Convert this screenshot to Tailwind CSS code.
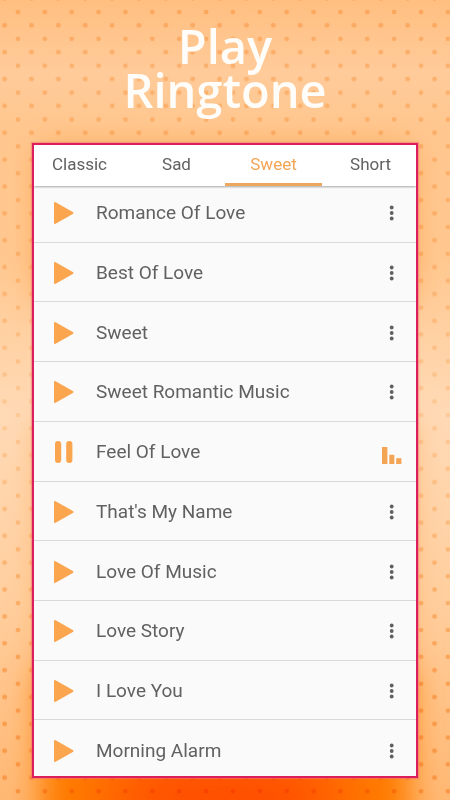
<!DOCTYPE html>
<html lang="en">
<head>
<meta charset="utf-8">
<meta name="viewport" content="width=device-width, initial-scale=1">
<title>Play Ringtone</title>
<script src="https://cdn.jsdelivr.net/npm/@tailwindcss/browser@4"></script>
</head>
<body class="font-[Roboto,sans-serif]">
<svg class="hidden" aria-hidden="true">
  <symbol id="play" viewBox="0 0 24 24"><path d="M3.6 1.2 20.8 10.9Q22.4 12 20.8 13.1L3.6 22.8Q2 23.6 2 21.8V2.2Q2 .4 3.6 1.2Z" fill="#fca54f"/></symbol>
  <symbol id="pause" viewBox="0 0 24 24"><rect x="3" y="1" width="6.2" height="22" rx="3" fill="#fca54f"/><rect x="14.2" y="1" width="6.2" height="22" rx="3" fill="#fca54f"/></symbol>
  <symbol id="more" viewBox="0 0 24 24"><g fill="#5f5f5f"><circle cx="11.7" cy="6.5" r="1.9"/><circle cx="11.7" cy="12" r="1.9"/><circle cx="11.7" cy="17.5" r="1.9"/></g></symbol>
  <symbol id="bars" viewBox="0 0 24 24"><g fill="#f4a455"><rect x="2" y="7" width="5.4" height="17"/><rect x="9.3" y="14.8" width="5" height="9.2"/><rect x="16.2" y="18.2" width="5.2" height="5.8"/></g></symbol>
</svg>
<div class="relative isolate flex min-h-screen flex-col overflow-hidden bg-linear-[180deg,#ffbf80_0%,#ffcb9a_9%,#ffc78f_16%,#ffc890_32%,#ffdab6_52%,#ffcf9f_75%,#ffb873_100%] px-8 pt-6 pb-[22px]">
  <div class="absolute inset-x-10 top-[150px] bottom-[500px] -z-20 bg-[#ffa24a] blur-lg"></div>
  <div class="absolute inset-x-10 top-[420px] bottom-[80px] -z-20 bg-[#ffb469] blur-lg"></div>
  <div class="absolute inset-x-10 top-[670px] -bottom-10 -z-20 bg-[#ff8000] blur-lg"></div>
  <div class="absolute inset-x-28 top-[760px] -bottom-10 -z-20 bg-[#ff3c00] blur-2xl"></div>
  <svg class="absolute inset-0 -z-10 size-full mix-blend-multiply" aria-hidden="true">
    <defs>
      <pattern id="dots" width="26.87" height="26.87" patternUnits="userSpaceOnUse">
        <circle cx="18" cy="12" r="2.4" fill="#f9d097"/><circle cx="4.6" cy="25.2" r="2.4" fill="#f9d097"/><circle cx="4.6" cy="-1.67" r="2.4" fill="#f9d097"/>
      </pattern>
      <linearGradient id="fade" x2="0" y2="1"><stop offset="0" stop-color="#bbb"/><stop offset=".35" stop-color="#999"/><stop offset=".52" stop-color="#666"/><stop offset=".85" stop-color="#fff"/></linearGradient>
      <mask id="fadeMask"><rect width="100%" height="100%" fill="url(#fade)"/></mask>
    </defs>
    <rect width="100%" height="100%" fill="url(#dots)" mask="url(#fadeMask)"/>
  </svg>

  <h1 class="text-center font-['Open_Sans',sans-serif] text-[47px] leading-[44px] font-semibold text-[#fffdf9]">Play<br>Ringtone</h1>

  <main class="mt-[31px] flex flex-1 flex-col overflow-hidden border-2 border-[#da1f5c] bg-[#fafafa] shadow-[0_0_1px_1px_#f4707088]">
    <nav class="relative z-10 bg-white shadow-[0_1px_2px_#00000055]" aria-label="Categories">
      <div class="-mx-[3px] grid grid-cols-4 text-center text-[17px] leading-6 text-[#616161]">
        <a href="#classic" class="border-b-3 border-transparent py-[7px]">Classic</a>
        <a href="#sad" class="border-b-3 border-transparent py-[7px]">Sad</a>
        <a href="#sweet" aria-current="page" class="border-b-3 border-[#eda860] py-[7px] text-[#f4a455]">Sweet</a>
        <a href="#short" class="border-b-3 border-transparent py-[7px]">Short</a>
      </div>
    </nav>
    <ul class="-mt-[3px] -mb-1 flex flex-1 flex-col text-[19px] leading-6 text-[#616161]">
      <li class="flex flex-1 items-center border-b border-[#dadada] pt-0.5 pr-3 pl-[18px]"><button class="size-6" aria-label="Play"><svg class="size-6"><use href="#play"/></svg></button><span class="ml-5 flex-1">Romance Of Love</span><button class="size-6" aria-label="More"><svg class="size-6"><use href="#more"/></svg></button></li>
      <li class="flex flex-1 items-center border-b border-[#dadada] pt-0.5 pr-3 pl-[18px]"><button class="size-6" aria-label="Play"><svg class="size-6"><use href="#play"/></svg></button><span class="ml-5 flex-1">Best Of Love</span><button class="size-6" aria-label="More"><svg class="size-6"><use href="#more"/></svg></button></li>
      <li class="flex flex-1 items-center border-b border-[#dadada] pt-0.5 pr-3 pl-[18px]"><button class="size-6" aria-label="Play"><svg class="size-6"><use href="#play"/></svg></button><span class="ml-5 flex-1">Sweet</span><button class="size-6" aria-label="More"><svg class="size-6"><use href="#more"/></svg></button></li>
      <li class="flex flex-1 items-center border-b border-[#dadada] pt-0.5 pr-3 pl-[18px]"><button class="size-6" aria-label="Play"><svg class="size-6"><use href="#play"/></svg></button><span class="ml-5 flex-1">Sweet Romantic Music</span><button class="size-6" aria-label="More"><svg class="size-6"><use href="#more"/></svg></button></li>
      <li class="flex flex-1 items-center border-b border-[#dadada] pt-0.5 pr-3 pl-[18px]"><button class="size-6" aria-label="Pause"><svg class="size-6"><use href="#pause"/></svg></button><span class="ml-5 flex-1">Feel Of Love</span><button class="size-6" aria-label="Now playing"><svg class="size-6"><use href="#bars"/></svg></button></li>
      <li class="flex flex-1 items-center border-b border-[#dadada] pt-0.5 pr-3 pl-[18px]"><button class="size-6" aria-label="Play"><svg class="size-6"><use href="#play"/></svg></button><span class="ml-5 flex-1">That's My Name</span><button class="size-6" aria-label="More"><svg class="size-6"><use href="#more"/></svg></button></li>
      <li class="flex flex-1 items-center border-b border-[#dadada] pt-0.5 pr-3 pl-[18px]"><button class="size-6" aria-label="Play"><svg class="size-6"><use href="#play"/></svg></button><span class="ml-5 flex-1">Love Of Music</span><button class="size-6" aria-label="More"><svg class="size-6"><use href="#more"/></svg></button></li>
      <li class="flex flex-1 items-center border-b border-[#dadada] pt-0.5 pr-3 pl-[18px]"><button class="size-6" aria-label="Play"><svg class="size-6"><use href="#play"/></svg></button><span class="ml-5 flex-1">Love Story</span><button class="size-6" aria-label="More"><svg class="size-6"><use href="#more"/></svg></button></li>
      <li class="flex flex-1 items-center border-b border-[#dadada] pt-0.5 pr-3 pl-[18px]"><button class="size-6" aria-label="Play"><svg class="size-6"><use href="#play"/></svg></button><span class="ml-5 flex-1">I Love You</span><button class="size-6" aria-label="More"><svg class="size-6"><use href="#more"/></svg></button></li>
      <li class="flex flex-1 items-center border-b border-[#dadada] pt-0.5 pr-3 pl-[18px]"><button class="size-6" aria-label="Play"><svg class="size-6"><use href="#play"/></svg></button><span class="ml-5 flex-1">Morning Alarm</span><button class="size-6" aria-label="More"><svg class="size-6"><use href="#more"/></svg></button></li>
    </ul>
  </main>
</div>
</body>
</html>
